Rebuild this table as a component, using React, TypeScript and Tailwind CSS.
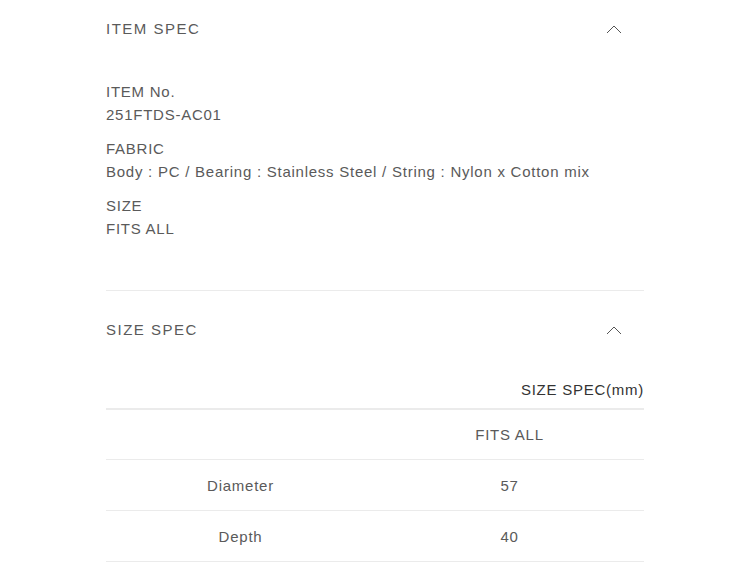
const font = { fontFamily: '"Liberation Sans", Arial, sans-serif' };

const Chevron = () => (
  <svg width="16" height="9" viewBox="0 0 16 9" fill="none" className="mr-[22px]">
    <path d="M1 8L8 1L15 8" stroke="#555" strokeWidth="1" />
  </svg>
);

const Header = ({ title }: { title: string }) => (
  <div className="flex h-[78px] items-center justify-between">
    <span className="pt-[1px] text-[15px] tracking-[0.1em] text-[#5a5a5a]">{title}</span>
    <Chevron />
  </div>
);

const specs = [
  { label: 'ITEM No.', value: '251FTDS-AC01' },
  { label: 'FABRIC', value: 'Body : PC / Bearing : Stainless Steel / String : Nylon x Cotton mix' },
  { label: 'SIZE', value: 'FITS ALL' },
];

const rows = [
  { name: 'Diameter', value: '57' },
  { name: 'Depth', value: '40' },
];

export default function App() {
  return (
    <div className="min-h-screen bg-white" style={font}>
      <div className="ml-[106px] -mt-[10px] w-[538px]">
        {/* Item spec */}
        <section>
          <Header title="ITEM SPEC" />
          <div className="flex flex-col gap-[12px] pt-[13px] pb-[50px] text-[15px] leading-[22.5px] tracking-[0.05em] text-[#5a5a5a]">
            {specs.map((s) => (
              <div key={s.label}>
                <p>{s.label}</p>
                <p>{s.value}</p>
              </div>
            ))}
          </div>
        </section>

        {/* Size spec */}
        <section className="border-t border-[#ebebeb]">
          <Header title="SIZE SPEC" />
          <div className="pt-[10px]">
            <p className="pt-[1px] text-right text-[15px] leading-[20px] tracking-[0.05em] text-[#333]">SIZE SPEC(mm)</p>
            <table className="mt-[8px] w-full border-t-2 border-[#ebebeb] text-[15px] tracking-[0.05em] text-[#5a5a5a]">
              <tbody>
                <tr className="h-[50px] border-b border-[#ebebeb]">
                  <td className="w-1/2" />
                  <td className="w-1/2 pt-[2px] text-center">FITS ALL</td>
                </tr>
                {rows.map((r) => (
                  <tr key={r.name} className="h-[51px] border-b border-[#ebebeb]">
                    <td className="pt-[3px] text-center">{r.name}</td>
                    <td className="pt-[3px] text-center">{r.value}</td>
                  </tr>
                ))}
              </tbody>
            </table>
          </div>
        </section>
      </div>
    </div>
  );
}
